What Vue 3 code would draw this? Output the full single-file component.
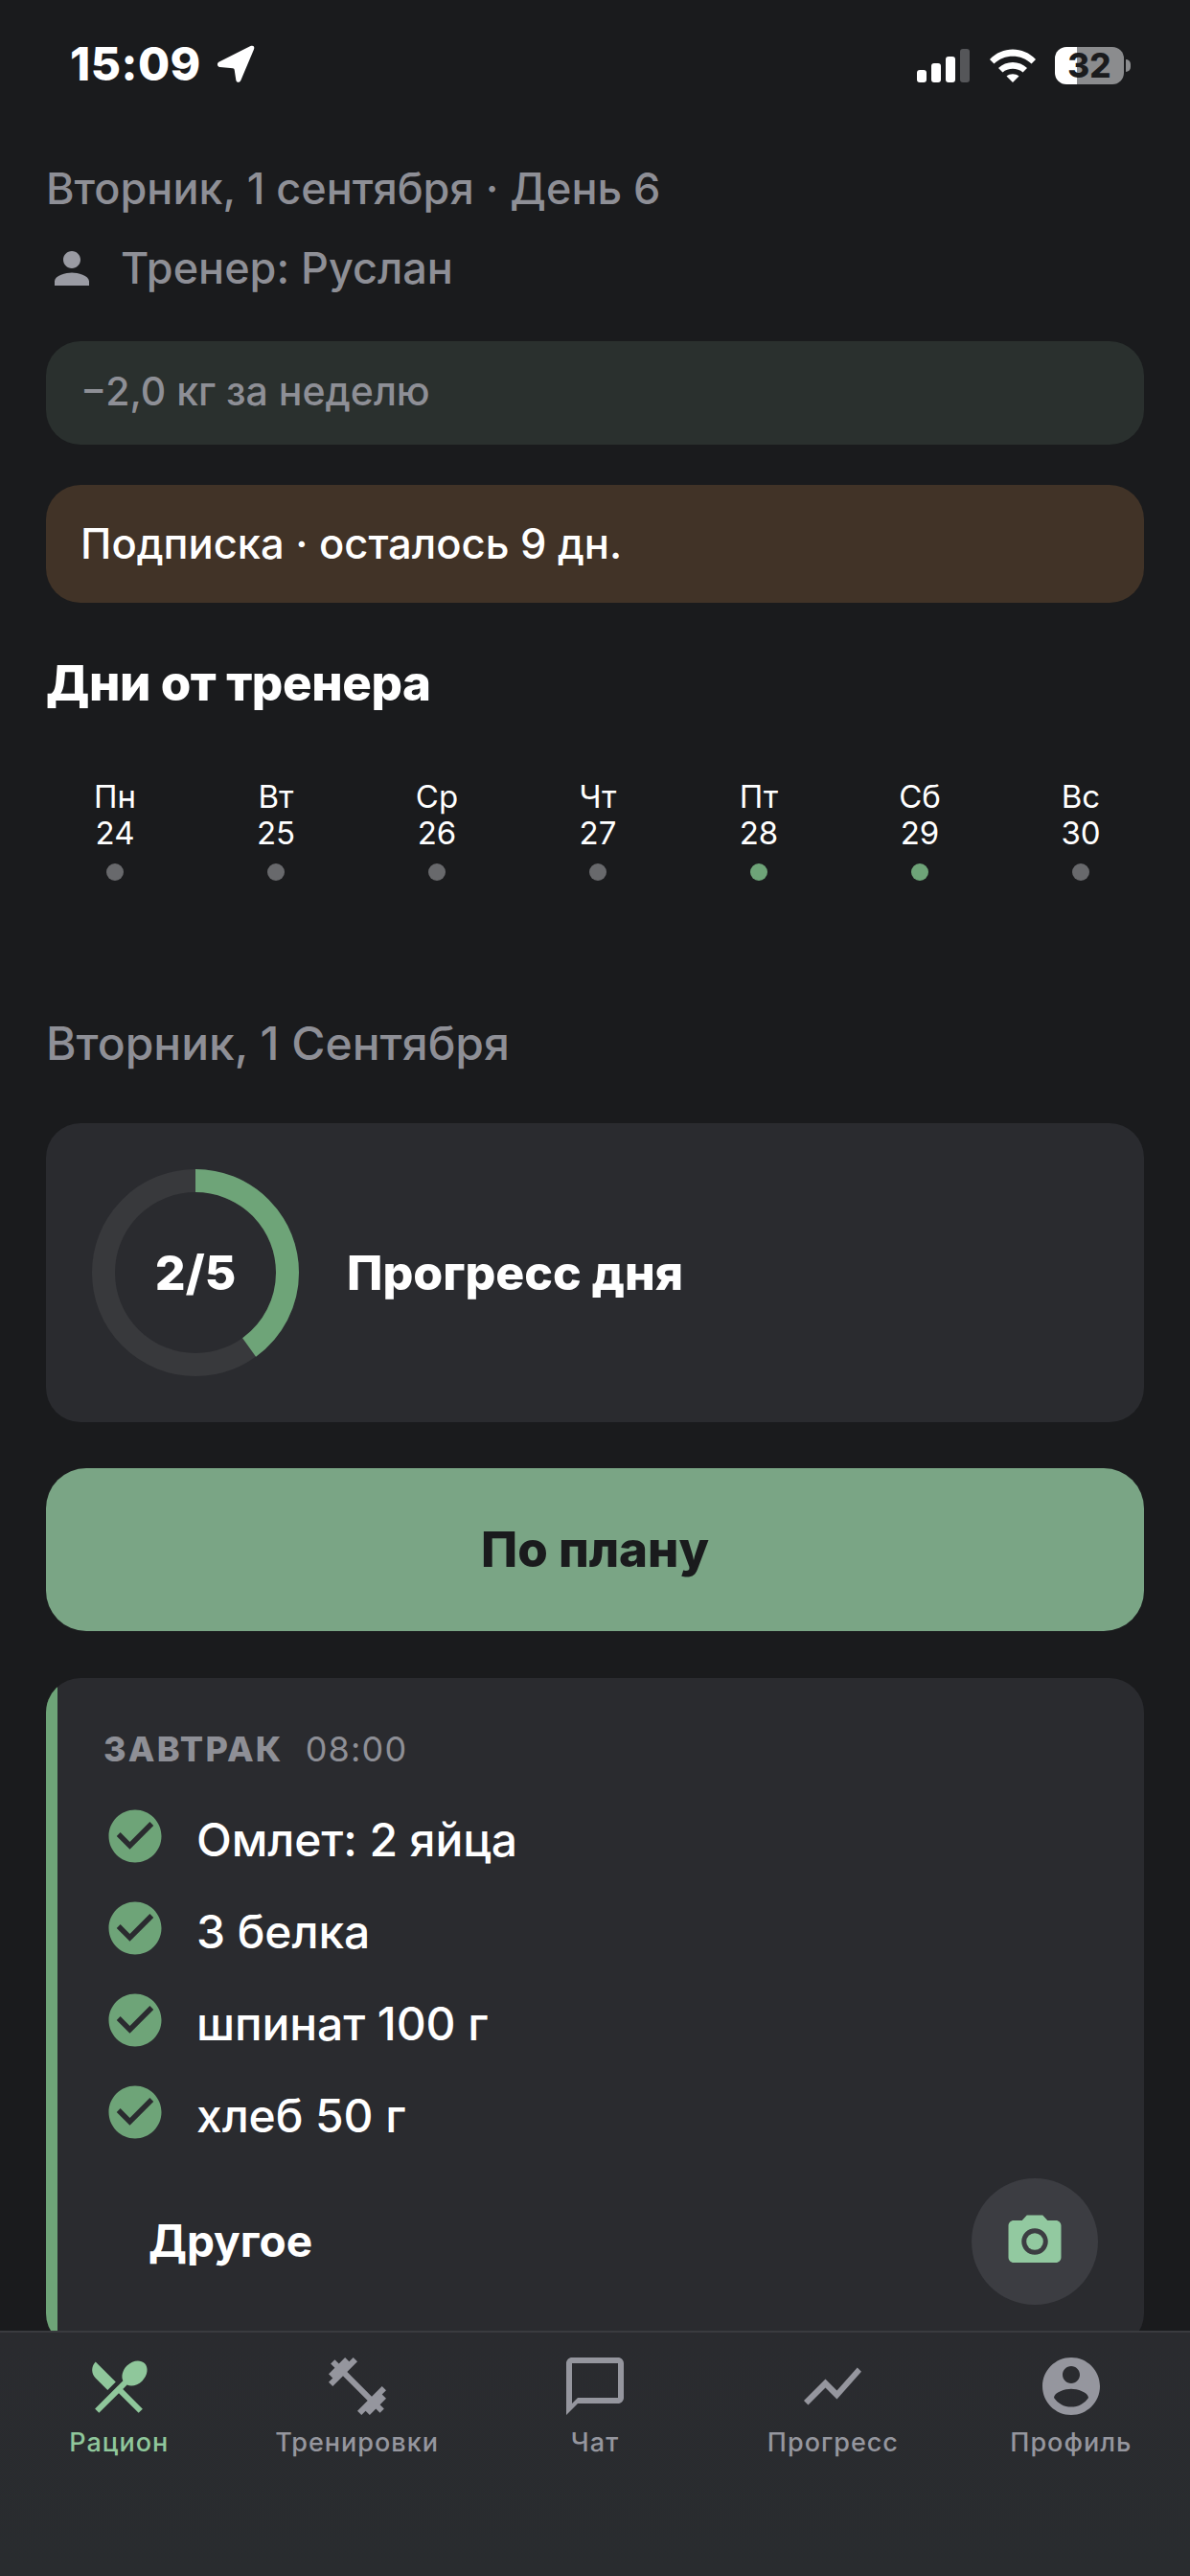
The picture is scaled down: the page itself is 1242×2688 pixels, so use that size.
<template>
  <div class="screen">
    <header class="status-bar">
      <div class="status-left">
        <span class="clock">15:09</span>
        <svg viewBox="0 0 40 40" width="40" height="40">
          <path d="M35.500 1 C38.500 0 40 1.500 39 4.500 L25.500 36.500 C24.300 39.700 20.800 39.500 20.300 36.500 L18.700 26 C18.500 25 18 24.500 17 24.300 L3.500 23 C0.500 22.500 0 18.700 2.800 17.500z" fill="#fff" />
        </svg>
      </div>
      <div class="status-right">
        <svg viewBox="0 0 56 36" width="56" height="36">
          <rect x="0" y="22" width="10" height="13" rx="3" fill="#fff" />
          <rect x="15" y="15" width="10" height="20" rx="3" fill="#fff" />
          <rect x="30" y="8" width="10" height="27" rx="3" fill="#fff" />
          <rect x="45" y="0" width="10" height="35" rx="3" fill="#555659" />
        </svg>
        <svg viewBox="0 0 48 36" width="48" height="36">
          <path d="M0 11 C13 -3 35 -3 48 11 L43.500 15.500 C33 5 15 5 4.500 15.500z" fill="#fff" />
          <path d="M9 20 C17 12 31 12 39 20 L34.500 24.500 C29 19.500 19 19.500 13.500 24.500z" fill="#fff" />
          <path d="M17.500 28.500 C21 25.500 27 25.500 30.500 28.500 L24 35z" fill="#fff" />
        </svg>
        <div class="battery">
          <div class="battery-body">32</div>
          <div class="battery-tip"></div>
        </div>
      </div>
    </header>

    <main class="content">
      <p class="date-line">Вторник, 1 сентября · День 6</p>
      <div class="trainer">
        <svg viewBox="0 0 24 24" width="54" height="54">
          <path :d="icons.person" fill="#9a9ba3" />
        </svg>
        <span>Тренер: Руслан</span>
      </div>

      <div class="banner banner-weight">−2,0 кг за неделю</div>
      <div class="banner banner-sub">Подписка · осталось 9 дн.</div>

      <h2 class="days-title">Дни от тренера</h2>
      <div class="days">
        <div v-for="day in days" :key="day.num" class="day">
          <span class="day-label">{{ day.label }}</span>
          <span class="day-num">{{ day.num }}</span>
          <span class="day-dot" :class="{ done: day.done }"></span>
        </div>
      </div>

      <p class="date-second">Вторник, 1 Сентября</p>

      <section class="progress-card">
        <div class="ring">
          <svg viewBox="0 0 216 216" width="216" height="216">
            <circle cx="108" cy="108" r="96" fill="none" stroke="#38393c" stroke-width="24" />
            <circle
              cx="108"
              cy="108"
              r="96"
              fill="none"
              stroke="#6ea478"
              stroke-width="24"
              stroke-dasharray="241.3 603.2"
              transform="rotate(-90 108 108)"
            />
          </svg>
          <span class="ring-text">2/5</span>
        </div>
        <span class="progress-title">Прогресс дня</span>
      </section>

      <button class="plan-btn">По плану</button>

      <section class="meal-card">
        <div class="meal-stripe"></div>
        <div class="meal-body">
          <div class="meal-head">
            <span class="meal-name">ЗАВТРАК</span>
            <span class="meal-time">08:00</span>
          </div>
          <ul class="meal-list">
            <li v-for="item in meal" :key="item" class="meal-item">
              <svg viewBox="0 0 24 24" width="66" height="66">
                <path :d="icons.check" fill="#6ea478" />
              </svg>
              <span>{{ item }}</span>
            </li>
          </ul>
          <div class="meal-foot">
            <span class="other">Другое</span>
            <div class="camera-btn">
              <svg viewBox="0 0 24 24" width="66" height="66" fill="#92c9a0">
                <circle cx="12" cy="12" r="3.2" />
                <path :d="icons.camera" />
              </svg>
            </div>
          </div>
        </div>
      </section>
    </main>

    <nav class="tab-bar">
      <div v-for="tab in tabs" :key="tab.label" class="tab" :class="{ active: tab.active }">
        <svg viewBox="0 0 24 24" width="72" height="72">
          <path :d="tab.icon" fill="currentColor" />
        </svg>
        <span>{{ tab.label }}</span>
      </div>
    </nav>
  </div>
</template>

<script setup>
const icons = {
  person: 'M12 12c2.21 0 4-1.79 4-4s-1.79-4-4-4-4 1.79-4 4 1.79 4 4 4zm0 2c-2.67 0-8 1.34-8 4v2h16v-2c0-2.66-5.33-4-8-4z',
  check: 'M12 2C6.48 2 2 6.48 2 12s4.48 10 10 10 10-4.48 10-10S17.52 2 12 2zm-2 15l-5-5 1.41-1.41L10 14.17l7.59-7.59L19 8l-9 9z',
  camera: 'M9 2L7.17 4H4c-1.1 0-2 .9-2 2v12c0 1.1.9 2 2 2h16c1.1 0 2-.9 2-2V6c0-1.1-.9-2-2-2h-3.17L15 2H9zm3 15c-2.76 0-5-2.24-5-5s2.24-5 5-5 5 2.24 5 5-2.24 5-5 5z'
}

const days = [
  { label: 'Пн', num: 24 },
  { label: 'Вт', num: 25 },
  { label: 'Ср', num: 26 },
  { label: 'Чт', num: 27 },
  { label: 'Пт', num: 28, done: true },
  { label: 'Сб', num: 29, done: true },
  { label: 'Вс', num: 30 }
]

const meal = ['Омлет: 2 яйца', '3 белка', 'шпинат 100 г', 'хлеб 50 г']

const tabs = [
  {
    label: 'Рацион',
    active: true,
    icon: 'M8.1 13.34l2.83-2.83L3.91 3.5c-1.56 1.56-1.56 4.09 0 5.66l4.19 4.18zm6.78-1.81c1.53.71 3.68.21 5.27-1.38 1.91-1.91 2.28-4.65.81-6.12-1.46-1.46-4.2-1.1-6.12.81-1.59 1.59-2.09 3.74-1.38 5.27L3.7 19.87l1.41 1.41L12 14.41l6.88 6.88 1.41-1.41L13.41 13l1.47-1.47z'
  },
  {
    label: 'Тренировки',
    icon: 'M20.57 14.86L22 13.43 20.57 12 17 15.57 8.43 7 12 3.43 10.57 2 9.14 3.43 7.71 2 5.57 4.14 4.14 2.71 2.71 4.14l1.43 1.43L2 7.71l1.43 1.43L2 10.57 3.43 12 7 8.43 15.57 17 12 20.57 13.43 22l1.43-1.43L16.29 22l2.14-2.14 1.43 1.43 1.43-1.43-1.43-1.43L22 16.29z'
  },
  {
    label: 'Чат',
    icon: 'M20 2H4c-1.1 0-2 .9-2 2v18l4-4h14c1.1 0 2-.9 2-2V4c0-1.1-.9-2-2-2zm0 14H6l-2 2V4h16v12z'
  },
  {
    label: 'Прогресс',
    icon: 'M3.5 18.49l6-6.01 4 4L22 6.92l-1.41-1.41-7.09 7.97-4-4L2 16.99z'
  },
  {
    label: 'Профиль',
    icon: 'M12 2C6.48 2 2 6.48 2 12s4.48 10 10 10 10-4.48 10-10S17.52 2 12 2zm0 3c1.66 0 3 1.34 3 3s-1.34 3-3 3-3-1.34-3-3 1.34-3 3-3zm0 14.2c-2.5 0-4.71-1.28-6-3.22.03-1.99 4-3.08 6-3.08 1.99 0 5.97 1.09 6 3.08-1.29 1.94-3.5 3.22-6 3.22z'
  }
]
</script>

<style>
html,
body {
  background: #1a1b1d;
}
</style>

<style scoped>
.screen {
  position: relative;
  width: 1242px;
  height: 2688px;
  overflow: hidden;
  background: #1a1b1d;
  color: #fff;
  font-family: Inter, "Noto Sans", sans-serif;
}

.status-bar {
  height: 134px;
  box-sizing: border-box;
  padding: 46px 62px 0 73px;
  display: flex;
  justify-content: space-between;
  align-items: flex-start;
}

.status-left {
  display: flex;
  align-items: center;
  gap: 16px;
}

.clock {
  font-size: 48px;
  line-height: 42px;
  font-weight: 800;
  letter-spacing: 0.5px;
}

.status-right {
  display: flex;
  align-items: center;
  gap: 20px;
  margin-top: 3px;
}

.battery {
  display: flex;
  align-items: center;
  gap: 2px;
}

.battery-body {
  width: 72px;
  height: 39px;
  border-radius: 12px;
  background: linear-gradient(90deg, #fff 23px, #8b8c8e 23px);
  text-align: center;
  font-size: 35px;
  font-weight: 800;
  line-height: 39px;
  color: #1a1b1d;
}

.battery-tip {
  width: 5px;
  height: 13px;
  border-radius: 0 5px 5px 0;
  background: #8b8c8e;
}

.content {
  padding: 36px 48px 0;
}

.date-line,
.date-second {
  margin: 0;
  line-height: 54px;
  font-weight: 500;
  color: #8e8f96;
}

.date-line {
  font-size: 45px;
}

.trainer {
  margin-top: 29px;
  display: flex;
  align-items: center;
  gap: 24px;
  font-size: 45px;
  line-height: 54px;
  font-weight: 500;
  color: #8e8f96;
}

.banner {
  box-sizing: border-box;
  padding: 0 36px;
  display: flex;
  align-items: center;
  border-radius: 36px;
  font-weight: 500;
}

.banner-weight {
  margin-top: 49px;
  height: 108px;
  padding-bottom: 5px;
  background: #2a302e;
  color: #8e8f96;
  font-size: 41px;
}

.banner-sub {
  margin-top: 42px;
  height: 123px;
  padding-bottom: 2px;
  background: #413327;
  color: #fff;
  font-size: 43.5px;
}

.days-title {
  margin: 54px 0 0;
  font-size: 51px;
  line-height: 60px;
  font-weight: 800;
  letter-spacing: -0.4px;
}

.days {
  margin: 69px 0 0 -12px;
  display: flex;
}

.day {
  flex: none;
  width: 168px;
  display: flex;
  flex-direction: column;
  align-items: center;
  font-size: 33px;
  line-height: 38px;
}

.day-dot {
  width: 18px;
  height: 18px;
  margin-top: 13px;
  border-radius: 50%;
  background: #68696c;
}

.day-dot.done {
  background: #6ea478;
}

.date-second {
  margin-top: 143px;
  font-size: 48px;
}

.progress-card {
  margin-top: 56px;
  height: 312px;
  box-sizing: border-box;
  padding: 0 48px;
  display: flex;
  align-items: center;
  gap: 50px;
  background: #2a2b2f;
  border-radius: 36px;
}

.ring {
  display: grid;
  place-items: center;
}

.ring svg,
.ring-text {
  grid-area: 1 / 1;
}

.ring-text {
  font-size: 50px;
  font-weight: 800;
}

.progress-title {
  font-size: 50px;
  font-weight: 800;
}

.plan-btn {
  display: block;
  margin-top: 48px;
  width: 100%;
  height: 170px;
  padding: 0 0 2px;
  border: 0;
  border-radius: 42px;
  background: #7aa585;
  color: #1a1b1d;
  font-family: inherit;
  font-size: 51px;
  font-weight: 800;
}

.meal-card {
  margin-top: 49px;
  display: flex;
  overflow: hidden;
  background: #2a2b2f;
  border-radius: 36px;
}

.meal-stripe {
  flex: none;
  width: 12px;
  background: #6ea478;
}

.meal-body {
  flex: 1;
  box-sizing: border-box;
  padding: 54px 48px 45px;
}

.meal-head {
  display: flex;
  align-items: center;
  gap: 23px;
  font-size: 36px;
  line-height: 40px;
  color: #8e8f96;
}

.meal-name {
  font-weight: 800;
  letter-spacing: 2.2px;
}

.meal-time {
  letter-spacing: 1.2px;
}

.meal-list {
  list-style: none;
  margin: 38px 0 0;
  padding: 0;
  display: flex;
  flex-direction: column;
  gap: 30px;
}

.meal-item {
  display: flex;
  align-items: center;
  gap: 31px;
  height: 66px;
  font-size: 48px;
  font-weight: 500;
  letter-spacing: -0.1px;
}

.meal-item span {
  padding-top: 6px;
}

.meal-foot {
  margin-top: 36px;
  display: flex;
  align-items: center;
  justify-content: space-between;
}

.other {
  padding: 0 0 2px 47px;
  font-size: 46px;
  font-weight: 700;
}

.camera-btn {
  width: 132px;
  height: 132px;
  border-radius: 50%;
  background: #3c3d42;
  display: flex;
  align-items: center;
  justify-content: center;
}

.tab-bar {
  position: absolute;
  left: 0;
  right: 0;
  bottom: 0;
  height: 256px;
  box-sizing: border-box;
  border-top: 2px solid #3a3b3f;
  background: linear-gradient(180deg, #2a2b2f, #292c2f);
  display: grid;
  grid-template-columns: repeat(5, 1fr);
  padding-top: 20px;
}

.tab {
  display: flex;
  flex-direction: column;
  align-items: center;
  gap: 5px;
  color: #95969e;
  font-size: 27px;
  line-height: 36px;
  font-weight: 500;
  letter-spacing: 1px;
}

.tab.active {
  color: #8fc79b;
}
</style>
